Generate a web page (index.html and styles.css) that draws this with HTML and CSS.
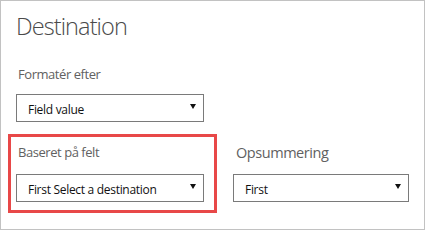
FILE: index.html
```html
<!DOCTYPE html>
<html>
<head>
<meta charset="utf-8">
<link rel="stylesheet" href="styles.css">
</head>
<body>
<div class="panel">
  <h1 class="title">Destination</h1>
  <div class="field">
    <div class="label">Formatér efter</div>
    <div class="select"><span class="value">Field value</span><span class="arrow"></span></div>
  </div>
  <div class="row">
    <div class="highlight">
      <div class="label">Baseret på felt</div>
      <div class="select"><span class="value">First Select a destination</span><span class="arrow"></span></div>
    </div>
    <div class="col">
      <div class="label label-lg">Opsummering</div>
      <div class="select select-sm"><span class="value">First</span><span class="arrow"></span></div>
    </div>
  </div>
</div>
</body>
</html>
```
FILE: styles.css
```css
html, body {
  margin: 0;
  padding: 0;
  background: #ffffff;
}
.panel {
  box-sizing: border-box;
  width: 425px;
  height: 230px;
  border: 1px solid #c2c2c2;
  background: #fff;
  font-family: "Open Sans", "Liberation Sans", sans-serif;
}
.title {
  margin: 0;
  padding: 10px 0 0 15px;
  font-size: 23.5px;
  line-height: 30px;
  font-weight: 300;
  color: #4a4a4a;
  letter-spacing: -0.9px;
}
.field {
  padding: 24px 0 0 15px;
}
.label {
  font-size: 13px;
  line-height: 18px;
  color: #616161;
  padding-left: 2px;
  margin-bottom: 11px;
  letter-spacing: -0.45px;
}
.highlight .label {
  margin-bottom: 13px;
}
.label-lg {
  font-size: 14.5px;
  padding-left: 3px;
  margin-bottom: 12px;
  letter-spacing: -0.45px;
}
.select {
  box-sizing: border-box;
  width: 188px;
  height: 28px;
  border: 1px solid #7a7a7a;
  display: flex;
  align-items: center;
  justify-content: space-between;
  padding: 0 7px 0 11px;
  background: #fff;
}
.select-sm {
  width: 176px;
}
.value {
  font-size: 12px;
  color: #111;
  letter-spacing: -0.3px;
  margin-top: 2px;
}
.arrow {
  width: 0;
  height: 0;
  border-left: 3px solid transparent;
  border-right: 3px solid transparent;
  border-top: 5px solid #111;
  margin-top: -3px;
}
.row {
  display: flex;
  align-items: flex-start;
  margin-top: 12px;
  padding-left: 7px;
  gap: 16px;
}
.highlight {
  box-sizing: border-box;
  width: 209px;
  height: 79px;
  border: 3px solid #e84848;
  padding: 6px 0 0 5px;
}
.col {
  padding-top: 10px;
}
```
